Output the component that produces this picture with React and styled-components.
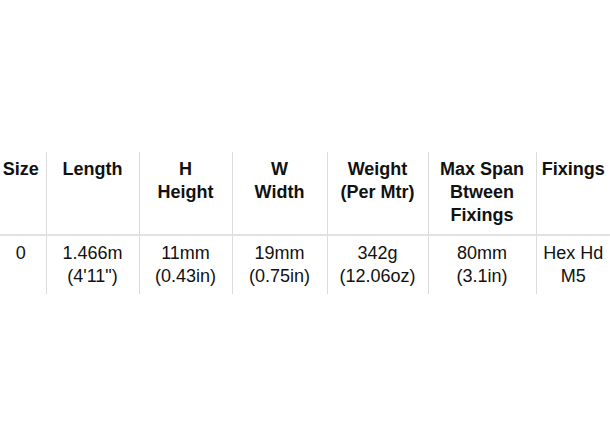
import React from 'react'
import styled, { createGlobalStyle } from 'styled-components'

const GlobalStyle = createGlobalStyle`
body{
  margin:0;
  background:#fff;
  font-family: "Liberation Sans", Arial, sans-serif;
  color:#111;
}
`

const columns = [
  { width: 46, head: ['Size'], body: ['0'] },
  { width: 93, head: ['Length'], body: ['1.466m', '(4\'11")'] },
  { width: 93, head: ['H', 'Height'], body: ['11mm', '(0.43in)'] },
  { width: 95, head: ['W', 'Width'], body: ['19mm', '(0.75in)'] },
  { width: 101, head: ['Weight', '(Per Mtr)'], body: ['342g', '(12.06oz)'] },
  { width: 108, head: ['Max Span', 'Btween', 'Fixings'], body: ['80mm', '(3.1in)'] },
  { width: 74, head: ['Fixings'], body: ['Hex Hd', 'M5'] },
]

const App = () => {
  return (
    <Page>
      <GlobalStyle />
      <SpecTable>
        <colgroup>
          {columns.map((c, i) => <col key={i} style={{ width: c.width }} />)}
        </colgroup>
        <thead>
          <tr>
            {columns.map((c, i) => (
              <HeadCell key={i}>
                {c.head.map((l, j) => <Line key={j}>{l}</Line>)}
              </HeadCell>
            ))}
          </tr>
        </thead>
        <tbody>
          <tr>
            {columns.map((c, i) => (
              <BodyCell key={i}>
                {c.body.map((l, j) => <Line key={j}>{l}</Line>)}
              </BodyCell>
            ))}
          </tr>
        </tbody>
      </SpecTable>
    </Page>
  )
}

const Page = styled.div`
width:610px;
height:442px;
padding-top:152px;
box-sizing:border-box;
overflow:hidden;
`

const SpecTable = styled.table`
border-collapse:collapse;
table-layout:fixed;
width:610px;
font-size:18px;
line-height:23px;
`

const HeadCell = styled.th`
font-weight:700;
text-align:center;
vertical-align:top;
padding:6px 0 7px;
white-space:nowrap;
&:first-child{
  padding-right:4px;
}
& + &{
  border-left:1px solid #dcdcdc;
}
`

const BodyCell = styled.td`
font-weight:400;
text-align:center;
vertical-align:top;
padding:6px 0 6px;
border-top:2px solid #e2e2e2;
white-space:nowrap;
&:first-child{
  padding-right:4px;
}
& + &{
  border-left:1px solid #dcdcdc;
}
`

const Line = styled.div``

export default App
